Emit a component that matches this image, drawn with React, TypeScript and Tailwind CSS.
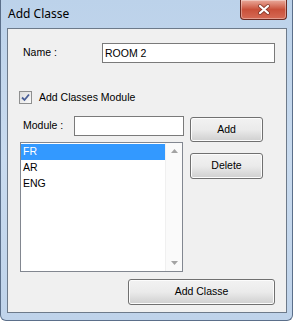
import { useState } from 'react';

const modules = ['FR', 'AR', 'ENG'];

function WinButton({ label, className }: { label: string; className: string }) {
  return (
    <button
      className={`flex items-center justify-center rounded-[3px] border border-[#707070] bg-linear-to-b from-[#f2f2f2] via-[#ebebeb] to-[#cfcfcf] text-[10.5px] text-black shadow-[inset_0_0_0_1px_#fcfcfc] ${className}`}
    >
      {label}
    </button>
  );
}

export default function App() {
  const [name, setName] = useState('ROOM 2');
  const [checked, setChecked] = useState(true);
  const [selected, setSelected] = useState(0);

  return (
    <div className="w-[293px] h-[321px] flex flex-col bg-linear-to-b from-[#bcd2ea] via-[#c9dbef] to-[#bfd3ea] border-x border-b border-[#5b6f8a] rounded-b-[6px] font-['Liberation_Sans',Arial,sans-serif] text-black overflow-hidden">
      {/* Title bar */}
      <div className="h-[28px] flex items-start shrink-0">
        <span className="pl-[7px] pt-[5px] text-[12px] font-['Noto_Sans',sans-serif] text-black">Add Classe</span>
        <div className="ml-auto mr-[5px] w-[47px] h-[20px] rounded-b-[4px] border border-t-0 border-[#6b2a22] bg-linear-to-b from-[#e9a99b] via-[#c9503a] to-[#d66a55] flex items-center justify-center shadow-[inset_0_0_0_1px_rgba(255,255,255,0.35)]">
          <svg width="14" height="11" viewBox="0 0 14 11">
            <path d="M3 2 L11 9 M11 2 L3 9" stroke="#5a241c" strokeWidth="4" strokeLinecap="round" fill="none" opacity="0.55" />
            <path d="M3 2 L11 9 M11 2 L3 9" stroke="#ffffff" strokeWidth="2.2" strokeLinecap="round" />
          </svg>
        </div>
      </div>

      {/* Client area */}
      <div className="ml-[6px] w-[280px] h-[285px] border border-[#6d7a8a] bg-[#f0f0f0] flex flex-col text-[10.5px]">
        {/* Name */}
        <div className="mt-[14px] h-[20px] flex items-center">
          <span className="w-[94px] pl-[15px]">Name :</span>
          <input
            value={name}
            onChange={(e) => setName(e.target.value)}
            className="w-[173px] h-[20px] border border-[#7a7a7a] bg-white px-[2px] text-[10.5px] outline-none"
          />
        </div>

        {/* Checkbox */}
        <label className="mt-[28px] pl-[11px] flex items-center h-[13px]">
          <span
            onClick={() => setChecked(!checked)}
            className="w-[13px] h-[13px] border border-[#8e8f8f] bg-linear-to-br from-[#dcdcdc] to-[#fbfbfb] flex items-center justify-center"
          >
            {checked && (
              <svg width="9" height="9" viewBox="0 0 9 9">
                <path d="M1 4.5 L3.5 7 L8 1.5" stroke="#4a5f97" strokeWidth="1.8" fill="none" />
              </svg>
            )}
          </span>
          <span className="ml-[7px]">Add Classes Module</span>
        </label>

        {/* Module section */}
        <div className="mt-[12px] pl-[12px] flex">
          <div className="w-[164px] flex flex-col">
            <div className="h-[20px] flex items-center">
              <span className="pl-[3px]">Module :</span>
              <input className="ml-auto w-[110px] h-[20px] border border-[#7a7a7a] bg-white outline-none" />
            </div>
            <div className="mt-[6px] w-[163px] h-[130px] border border-[#828790] bg-white flex">
              <div className="flex-1 pt-[1px]">
                {modules.map((m, i) => (
                  <div
                    key={m}
                    onClick={() => setSelected(i)}
                    className={`h-[16px] pl-[2px] flex items-center ${i === selected ? 'bg-[#3399ff] text-white' : 'text-black'}`}
                  >
                    {m}
                  </div>
                ))}
              </div>
              <div className="w-[17px] bg-[#fafafa] border-l border-[#f0f0f0] flex flex-col justify-between items-center py-[6px]">
                <svg width="7" height="4" viewBox="0 0 7 4">
                  <path d="M0 4 L3.5 0 L7 4 Z" fill="#a3a3a3" />
                </svg>
                <svg width="7" height="4" viewBox="0 0 7 4">
                  <path d="M0 0 L3.5 4 L7 0 Z" fill="#a3a3a3" />
                </svg>
              </div>
            </div>
          </div>
          <div className="ml-[6px] flex flex-col">
            <WinButton label="Add" className="mt-[1px] w-[73px] h-[25px]" />
            <WinButton label="Delete" className="mt-[11px] w-[73px] h-[26px]" />
          </div>
        </div>

        {/* Bottom */}
        <WinButton label="Add Classe" className="mt-[7px] ml-[120px] w-[147px] h-[26px]" />
      </div>
    </div>
  );
}
